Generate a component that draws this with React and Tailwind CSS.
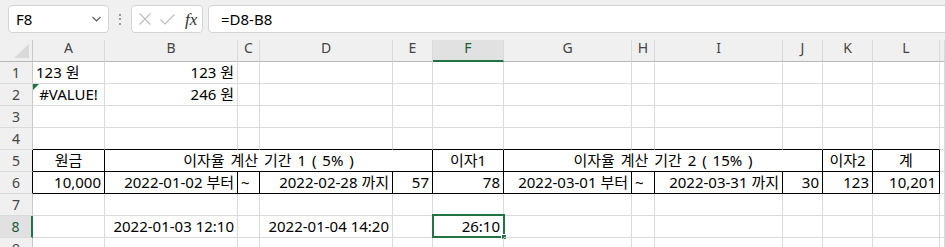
import React from "react";

const font = { fontFamily: '"Noto Sans", "Noto Sans CJK KR", sans-serif' };

const columns = ["A", "B", "C", "D", "E", "F", "G", "H", "I", "J", "K", "L", ""];

// each row: list of cells from column A to the spare column at the right edge
const rows = [
  { n: 1, cells: [{ t: "123 원", a: "l" }, { t: "123 원", a: "r" }, {}, {}, {}, {}, {}, {}, {}, {}, {}, {}, {}] },
  { n: 2, cells: [{ t: "#VALUE!", a: "c", err: true }, { t: "246 원", a: "r" }, {}, {}, {}, {}, {}, {}, {}, {}, {}, {}, {}] },
  { n: 3, cells: [{}, {}, {}, {}, {}, {}, {}, {}, {}, {}, {}, {}, {}] },
  { n: 4, top: true, cells: [{}, {}, {}, {}, {}, {}, {}, {}, {}, {}, {}, {}, {}] },
  {
    n: 5,
    boxed: true,
    cells: [
      { t: "원금", a: "c" },
      { t: "이자율 계산 기간 1 ( 5% )", a: "c", span: "col-span-4 [word-spacing:2px]" },
      { t: "이자1", a: "c" },
      { t: "이자율 계산 기간 2 ( 15% )", a: "c", span: "col-span-4 [word-spacing:2px]" },
      { t: "이자2", a: "c" },
      { t: "계", a: "c" },
      { edge: true },
    ],
  },
  {
    n: 6,
    boxed: true,
    cells: [
      { t: "10,000", a: "r" },
      { t: "2022-01-02 부터", a: "r" },
      { t: "~", a: "l" },
      { t: "2022-02-28 까지", a: "r" },
      { t: "57", a: "r" },
      { t: "78", a: "r" },
      { t: "2022-03-01 부터", a: "r" },
      { t: "~", a: "l" },
      { t: "2022-03-31 까지", a: "r" },
      { t: "30", a: "r" },
      { t: "123", a: "r" },
      { t: "10,201", a: "r" },
      { edge: true },
    ],
  },
  { n: 7, cells: [{}, {}, {}, {}, {}, {}, {}, {}, {}, {}, {}, {}, {}] },
  {
    n: 8,
    active: true,
    cells: [{}, { t: "2022-01-03 12:10", a: "r" }, {}, { t: "2022-01-04 14:20", a: "r" }, {}, { t: "26:10", a: "r", sel: true }, {}, {}, {}, {}, {}, {}, {}],
  },
  { n: 9, cells: [{}, {}, {}, {}, {}, {}, {}, {}, {}, {}, {}, {}, {}] },
];

const alignClass = {
  l: "justify-start pl-[3px]",
  r: "justify-end pr-[3px]",
  c: "justify-center",
};

function Toolbar() {
  return (
    <div className="h-[40px] bg-[#f0f0f0] flex items-start pt-[5px] pl-[8px]">
      <div className="w-[101px] h-[28px] rounded-[4px] border border-[#d4d4d4] bg-white flex items-center justify-between pl-[7px] pr-[7px]">
        <span className="text-[15px] text-black leading-none">F8</span>
        <svg width="9" height="6" viewBox="0 0 9 6">
          <path d="M0.5 0.8 L4.5 4.8 L8.5 0.8" fill="none" stroke="#505050" strokeWidth="1.2" />
        </svg>
      </div>
      <div className="w-[22px] h-[28px] flex flex-col items-center justify-center gap-[2.5px]">
        <span className="w-[2px] h-[2px] bg-[#9a9a9a]" />
        <span className="w-[2px] h-[2px] bg-[#9a9a9a]" />
        <span className="w-[2px] h-[2px] bg-[#9a9a9a]" />
      </div>
      <div className="w-[72px] h-[28px] rounded-[4px] border border-[#d4d4d4] bg-white flex items-center pl-[5px]">
        <svg width="14" height="12" viewBox="0 0 14 12" className="ml-[1px]">
          <path d="M1.5 0.5 L12.5 11.5 M12.5 0.5 L1.5 11.5" stroke="#bcbcbc" strokeWidth="1.1" fill="none" />
        </svg>
        <svg width="15" height="11" viewBox="0 0 15 11" className="ml-[8px]">
          <path d="M0.5 5.5 L5 10 L14.5 0.5" stroke="#bcbcbc" strokeWidth="1.1" fill="none" />
        </svg>
        <span
          className="ml-[10px] text-[17px] italic text-[#333] leading-none"
          style={{ fontFamily: '"Liberation Serif", serif' }}
        >
          fx
        </span>
      </div>
      <div className="flex-1 -mr-[20px] ml-[5px] h-[28px] rounded-[4px] border border-[#d4d4d4] bg-white flex items-center pl-[12px]">
        <span className="text-[15px] text-black leading-none">=D8-B8</span>
      </div>
    </div>
  );
}

function HeaderRow() {
  return (
    <>
      <div className="h-[22px] bg-[#f0f0f0] border-r border-b border-r-[#c8c8c8] border-b-[#b8b8b8] relative">
        <svg width="15" height="14" viewBox="0 0 15 14" className="absolute right-[3px] bottom-[3px]">
          <path d="M15 0 L15 14 L0 14 Z" fill="#d9d9d9" />
        </svg>
      </div>
      {columns.map((c, i) =>
        c === "F" ? (
          <div
            key={i}
            className="h-[22px] bg-[#e1e1e1] border-r border-r-[#dadada] border-b-2 border-b-[#217346] flex justify-center items-start text-[14px] leading-[16px] text-[#185c37]"
          >
            {c}
          </div>
        ) : (
          <div
            key={i}
            className="h-[22px] bg-[#f0f0f0] border-r border-b border-r-[#dadada] border-b-[#b8b8b8] flex justify-center items-start text-[14px] leading-[16px] text-[#444]"
          >
            {c}
          </div>
        )
      )}
    </>
  );
}

function Row({ row }) {
  const headCls = row.active
    ? "bg-[#e1e1e1] border-r-2 border-r-[#217346] text-[#185c37]"
    : row.boxed
    ? "bg-[#f0f0f0] border-r border-r-black text-[#444]"
    : "bg-[#f0f0f0] border-r border-r-[#c8c8c8] text-[#444]";

  return (
    <>
      <div className={`h-[22px] border-b border-b-[#dadada] flex justify-center text-[14px] leading-[21px] ${headCls}`}>
        {row.n}
      </div>
      {row.cells.map((c, i) => {
        let border = "border-r border-b border-[#dadada]";
        if (row.boxed && !c.edge) border = "border-r border-b border-black";
        else if (row.boxed && c.edge) border = "border-r border-b border-r-[#dadada] border-b-[#dadada]";
        else if (row.top && i < 12) border = "border-r border-b border-r-[#dadada] border-b-black";

        return (
          <div
            key={i}
            className={`h-[22px] relative flex whitespace-nowrap text-[15px] leading-[21px] text-black ${border} ${
              c.span || ""
            } ${alignClass[c.a] || ""}`}
          >
            {c.err && (
              <svg width="6" height="6" viewBox="0 0 6 6" className="absolute left-0 top-0">
                <path d="M0 0 H6 L0 6 Z" fill="#1e7145" />
              </svg>
            )}
            {c.t}
            {c.sel && (
              <>
                <div className="absolute -left-[1px] -top-[2px] -right-[2px] -bottom-[1px] border-2 border-[#217346]" />
                <div className="absolute -right-[4px] -bottom-[3px] w-[6px] h-[6px] bg-[#217346] border border-white" />
              </>
            )}
          </div>
        );
      })}
    </>
  );
}

export default function App() {
  return (
    <div className="w-[945px] h-[247px] overflow-hidden bg-white" style={font}>
      <Toolbar />
      <div className="grid grid-cols-[33px_72px_133px_22px_133px_40px_71px_128px_23px_128px_40px_50px_67px_1fr]">
        <HeaderRow />
        {rows.map((r) => (
          <Row key={r.n} row={r} />
        ))}
      </div>
    </div>
  );
}
